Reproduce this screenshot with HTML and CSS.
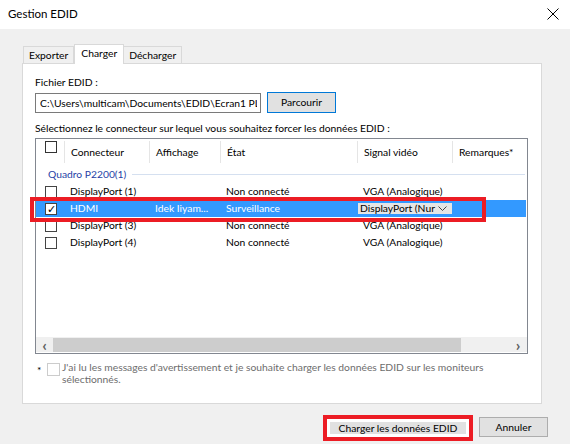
FILE: index.html
```html
<!DOCTYPE html>
<html>
<head>
    <title>Gestion EDID</title>
    <link rel="stylesheet" href="styles.css">
</head>
<body>
    <div class="titlebar">
        <span class="title">Gestion EDID</span>
        <svg class="close" width="12" height="12" viewBox="0 0 12 12">
            <path d="M0.5 0.5 L11.5 11.5 M11.5 0.5 L0.5 11.5" stroke="#000" stroke-width="1" fill="none"/>
        </svg>
    </div>

    <div class="main">
        <!-- Onglets -->
        <div class="tabs">
            <div class="tab">Exporter</div>
            <div class="tab active">Charger</div>
            <div class="tab">Décharger</div>
        </div>

        <div class="panel">
            <div class="label">Fichier EDID :</div>
            <div class="file-row">
                <div class="textbox"><span class="path">C:\Users\multicam\Documents\EDID\Ecran1 PLT:\</span></div>
                <div class="btn btn-default">Parcourir</div>
            </div>

            <div class="label intro">Sélectionnez le connecteur sur lequel vous souhaitez forcer les données EDID :</div>

            <div class="listbox">
                <div class="grid head">
                    <div class="cell"><span class="check"></span></div>
                    <div class="cell sep">Connecteur</div>
                    <div class="cell sep">Affichage</div>
                    <div class="cell sep">État</div>
                    <div class="cell sep">Signal vidéo</div>
                    <div class="cell sep">Remarques*</div>
                </div>

                <div class="group">
                    <span>Quadro P2200(1)</span>
                    <span class="group-line"></span>
                </div>

                <div class="grid row">
                    <div class="cell"><span class="check"></span></div>
                    <div class="cell">DisplayPort (1)</div>
                    <div class="cell"></div>
                    <div class="cell">Non connecté</div>
                    <div class="cell">VGA (Analogique)</div>
                    <div class="cell"></div>
                </div>
                <div class="grid row selected">
                    <div class="cell"><span class="check checked">&#10003;</span></div>
                    <div class="cell">HDMI</div>
                    <div class="cell">Idek Iiyam...</div>
                    <div class="cell">Surveillance</div>
                    <div class="cell"><span class="combo"><span class="combo-text">DisplayPort (Nur</span><svg width="9" height="5" viewBox="0 0 9 5"><path d="M0.5 0.5 L4.5 4.5 L8.5 0.5" stroke="#444" fill="none"/></svg></span></div>
                    <div class="cell"></div>
                </div>
                <div class="grid row">
                    <div class="cell"><span class="check"></span></div>
                    <div class="cell">DisplayPort (3)</div>
                    <div class="cell"></div>
                    <div class="cell">Non connecté</div>
                    <div class="cell">VGA (Analogique)</div>
                    <div class="cell"></div>
                </div>
                <div class="grid row">
                    <div class="cell"><span class="check"></span></div>
                    <div class="cell">DisplayPort (4)</div>
                    <div class="cell"></div>
                    <div class="cell">Non connecté</div>
                    <div class="cell">VGA (Analogique)</div>
                    <div class="cell"></div>
                </div>

                <div class="spacer"></div>

                <!-- Barre de défilement horizontale -->
                <div class="hscroll">
                    <span class="arrow">&lsaquo;</span>
                    <span class="thumb"></span>
                    <span class="arrow right">&rsaquo;</span>
                </div>

                <!-- Cadre rouge d'annotation -->
                <div class="mark mark-row"></div>
            </div>

            <div class="note">
                <span class="star">*</span>
                <span class="check disabled"></span>
                <span class="note-text">J'ai lu les messages d'avertissement et je souhaite charger les données EDID sur les moniteurs sélectionnés.</span>
            </div>
        </div>

        <div class="footer">
            <div class="mark-btn">
                <div class="btn btn-load">Charger les données EDID</div>
            </div>
            <div class="btn btn-cancel">Annuler</div>
        </div>
    </div>
</body>
</html>
```

FILE: styles.css
```css
body {
    margin: 0;
    padding: 0;
    background-color: #f0f0f0;
    font-family: Lato, "Liberation Sans", sans-serif;
    font-size: 10.3px;
    color: #000;
}

.titlebar {
    height: 27px;
    background-color: #fff;
    display: flex;
    align-items: center;
    justify-content: space-between;
    padding: 0 11px 2px 8px;
    font-size: 11.5px;
}

.close {
    display: block;
}

.main {
    padding: 15px 28px 0 22px;
}

/* Onglets */
.tabs {
    display: flex;
    align-items: flex-end;
    height: 19px;
    padding-left: 1px;
}

.tab {
    height: 17px;
    line-height: 16px;
    padding: 0 5px;
    background-color: #f0f0f0;
    border: 1px solid #d9d9d9;
    border-bottom: none;
    box-sizing: border-box;
    margin-right: -1px;
}

.tab.active {
    height: 20px;
    line-height: 16px;
    background-color: #fff;
    margin: 0 -1px -1px 1px;
    padding: 0 6px;
    position: relative;
    z-index: 1;
}

.panel {
    height: 341px;
    box-sizing: border-box;
    background-color: #fff;
    border: 1px solid #d9d9d9;
    padding: 10px 14px 0 12px;
}

.label {
    line-height: 16px;
}

.file-row {
    display: flex;
    align-items: flex-start;
    gap: 6px;
    margin-top: 2px;
}

.textbox {
    width: 226px;
    height: 20px;
    box-sizing: border-box;
    border: 1px solid #7a7a7a;
    padding: 0 3px 0 4px;
    line-height: 18px;
    flex-shrink: 0;
    margin-top: 1px;
}

.path {
    display: block;
    white-space: nowrap;
    overflow: hidden;
}

.btn {
    background-color: #e1e1e1;
    border: 1px solid #adadad;
    box-sizing: border-box;
    text-align: center;
    white-space: nowrap;
}

.btn-default {
    width: 69px;
    height: 21px;
    line-height: 19px;
    border-color: #0078d7;
}

.intro {
    margin-top: 7px;
}

/* Liste des connecteurs */
.listbox {
    position: relative;
    margin-top: 2px;
    width: 493px;
    height: 216px;
    box-sizing: border-box;
    border: 1px solid #828790;
    display: flex;
    flex-direction: column;
}

.grid {
    display: grid;
    grid-template-columns: 28px 85px 71px 137px 95px 1fr;
    align-items: center;
}

.cell {
    padding-left: 6px;
    white-space: nowrap;
    overflow: hidden;
}

.cell:first-child {
    padding-left: 9px;
}

.head {
    height: 26px;
}

.head .cell {
    height: 22px;
    line-height: 22px;
}

.head .sep {
    border-left: 1px solid #e5e5e5;
}

.check {
    display: block;
    width: 12px;
    height: 12px;
    box-sizing: border-box;
    border: 1px solid #333;
    background-color: #fff;
    font-size: 11px;
    line-height: 10px;
    text-align: center;
    color: #000;
}

.group {
    height: 18px;
    display: flex;
    align-items: center;
    padding-left: 12px;
    color: #1f3fa6;
    gap: 6px;
}

.group-line {
    flex: 1;
    height: 1px;
    background-color: #d5e0f0;
    margin-right: 2px;
}

.row {
    height: 17px;
    line-height: 17px;
}

.row .check {
    border-color: #444;
}

.selected {
    background-color: #3399ff;
    color: #fff;
    margin-right: 1px;
}

.combo {
    display: flex;
    align-items: center;
    justify-content: space-between;
    width: 94px;
    height: 11px;
    box-sizing: border-box;
    margin-left: -5px;
    padding: 0 5px 0 2px;
    background-color: #e5e5e5;
    color: #000;
    line-height: 11px;
}

.combo-text {
    width: 76px;
    overflow: hidden;
}

.spacer {
    flex: 1;
}

.hscroll {
    height: 15px;
    margin: 0 0 1px 0;
    background-color: #f0f0f0;
    display: flex;
    align-items: center;
}

.arrow {
    width: 17px;
    text-align: center;
    font-size: 16px;
    font-weight: bold;
    line-height: 14px;
    color: #606060;
}

.arrow.right {
    margin-left: auto;
    width: 18px;
}

.thumb {
    width: 408px;
    height: 14px;
    background-color: #cdcdcd;
}

/* Cadres rouges d'annotation */
.mark {
    position: absolute;
    border: 4px solid #ec1c24;
}

.mark-row {
    left: -6px;
    top: 58px;
    width: 448px;
    height: 17px;
}

.note {
    display: flex;
    align-items: flex-start;
    margin-top: 7px;
    color: #6d6d6d;
    line-height: 12px;
}

.star {
    width: 10px;
    padding-left: 2px;
    margin-top: 3px;
    color: #000;
}

.check.disabled {
    width: 13px;
    height: 13px;
    border-color: #cccccc;
    margin-top: 2px;
    margin-right: 2px;
}

.note-text {
    width: 430px;
}

/* Boutons du bas */
.footer {
    display: flex;
    justify-content: flex-end;
    align-items: flex-start;
    gap: 6px;
    padding-top: 11px;
    margin-right: -6px;
}

.mark-btn {
    border: 4px solid #ec1c24;
    padding: 3px;
    background-color: #fff;
}

.btn-load {
    width: 136px;
    height: 12px;
    line-height: 12px;
    border: none;
}

.btn-cancel {
    width: 69px;
    height: 20px;
    line-height: 18px;
    margin-top: 2px;
}
```
